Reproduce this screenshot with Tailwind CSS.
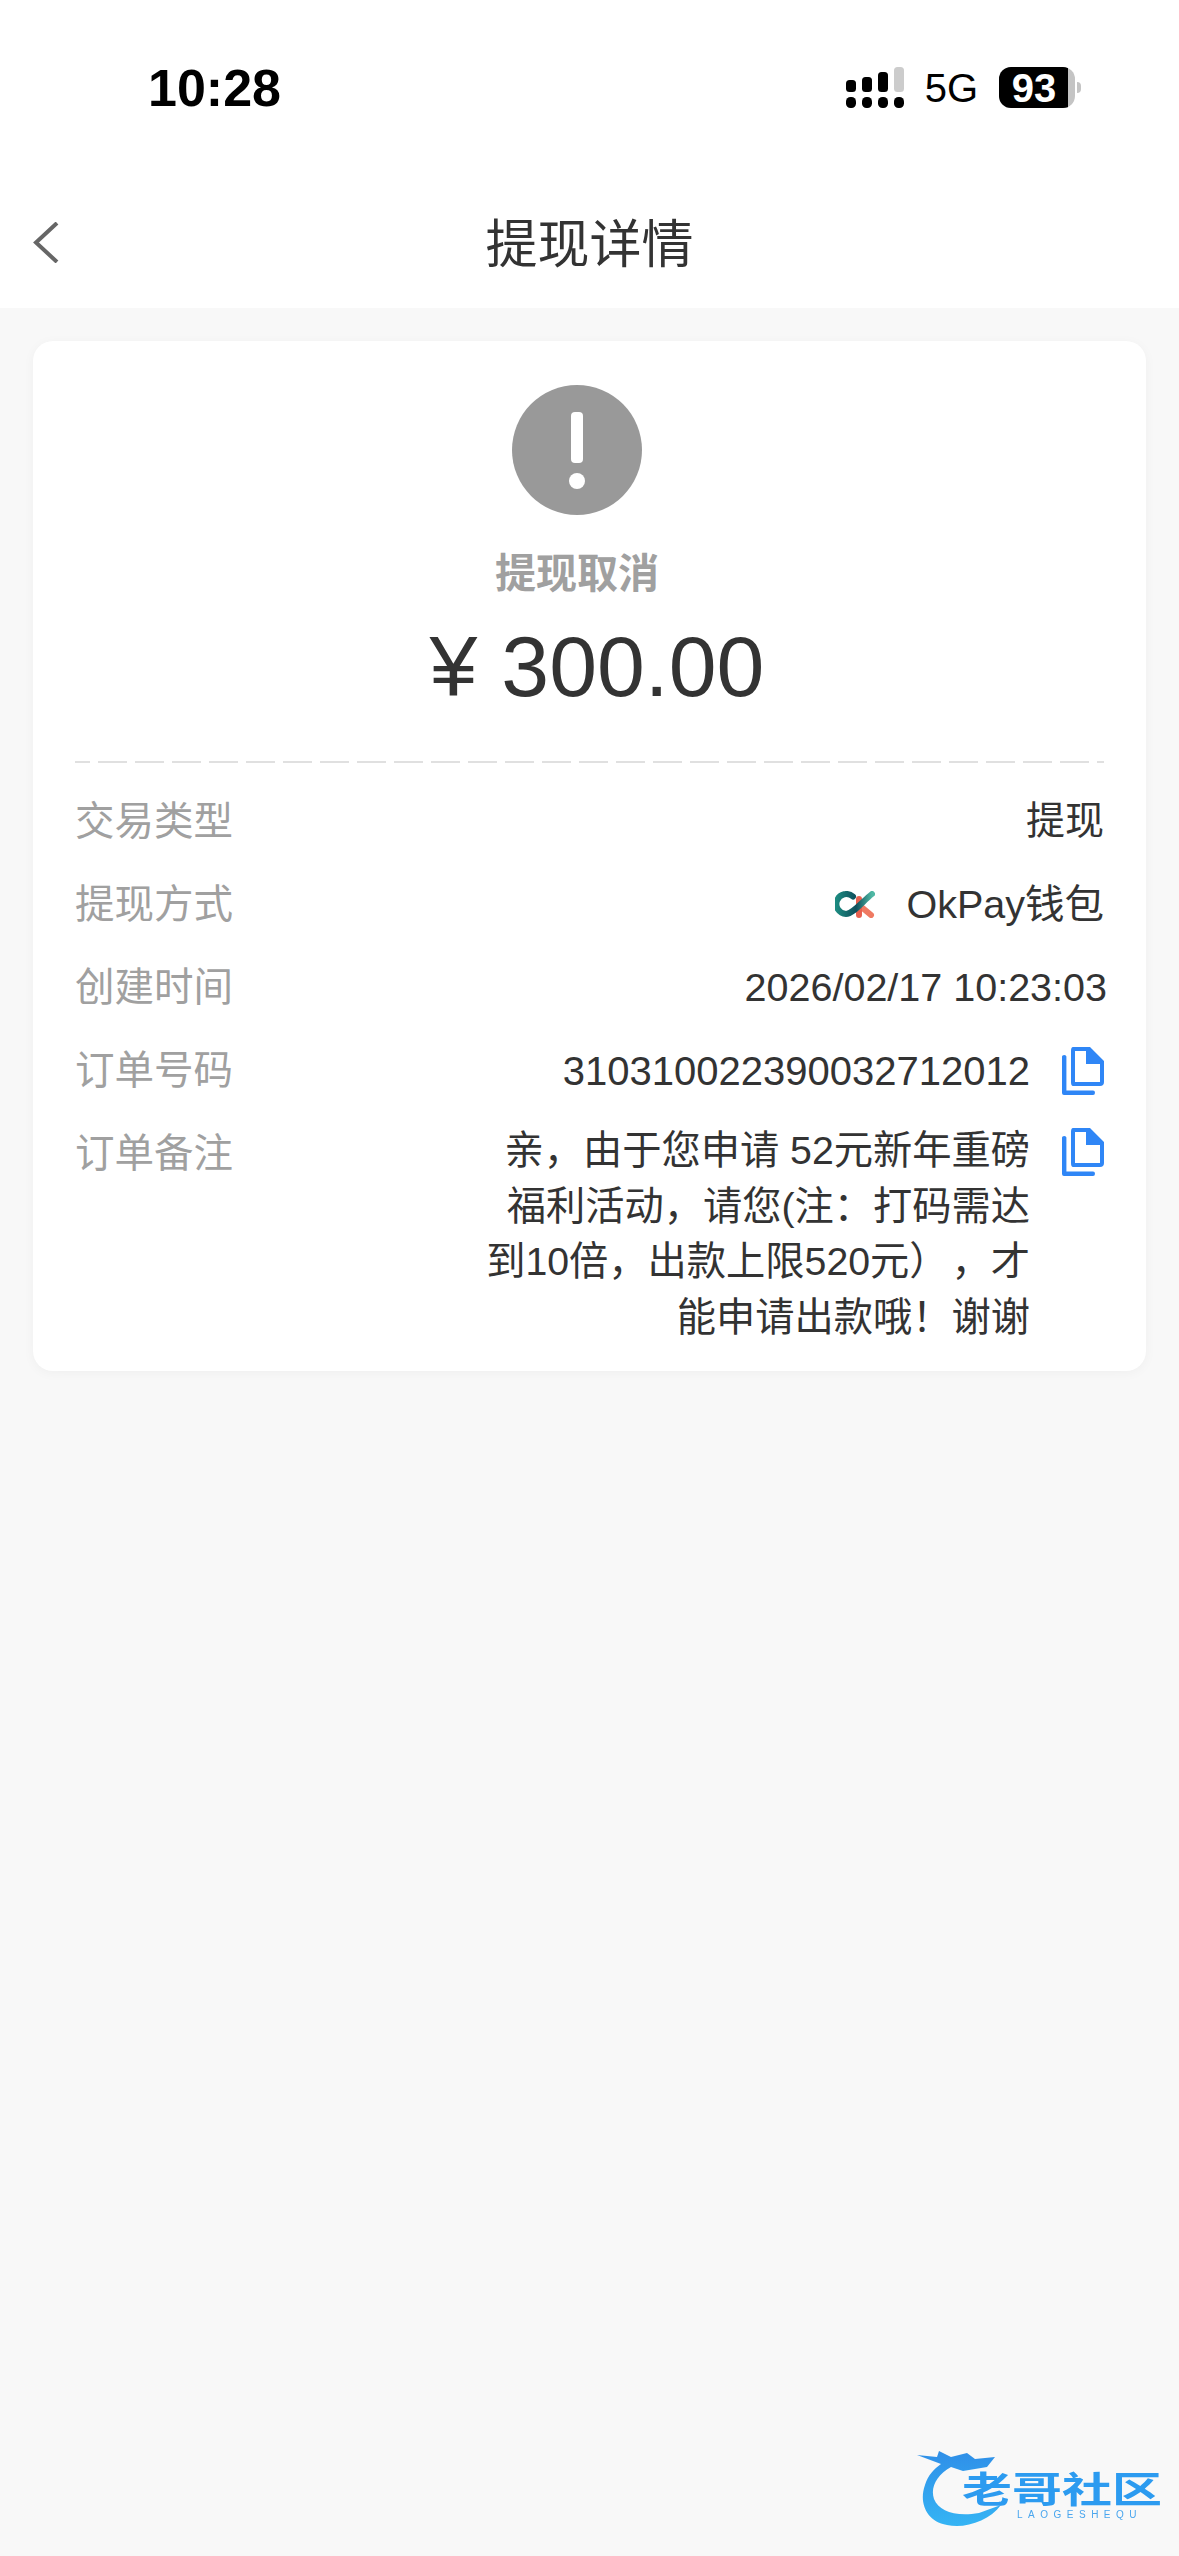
<!DOCTYPE html>
<html lang="zh-CN">
<head>
    <meta charset="UTF-8">
    <meta name="viewport" content="width=device-width, initial-scale=1.0">
    <title>提现详情</title>
    <script src="https://cdn.jsdelivr.net/npm/@tailwindcss/browser@4"></script>
</head>
<body class="relative w-[1179px] h-[2556px] overflow-hidden bg-[#f8f8f8] text-[#333] font-['Liberation_Sans','Noto_Sans_CJK_SC',sans-serif]">
    <!-- top bar -->
    <header class="bg-white">
        <div class="flex items-start justify-between h-[176px] pt-[57px] pl-[148px] pr-[98px] text-black">
            <span class="text-[52px] leading-[62px] font-bold">10:28</span>
            <div class="flex items-start pt-[10px]">
                <svg class="w-[58px] h-[41px]" viewBox="0 0 58 41">
                    <rect x="0" y="13" width="10" height="12" rx="3.500"/>
                    <rect x="16" y="10" width="10" height="15" rx="3.500"/>
                    <rect x="32" y="5" width="10" height="20" rx="3.500"/>
                    <rect x="48" y="0" width="10" height="25" rx="3.500" fill="#cccccc"/>
                    <rect x="0" y="30" width="10" height="11" rx="4.500"/>
                    <rect x="16" y="30" width="10" height="11" rx="4.500"/>
                    <rect x="32" y="30" width="10" height="11" rx="4.500"/>
                    <rect x="48" y="30" width="10" height="11" rx="4.500"/>
                </svg>
                <span class="ml-[21px] mt-[1px] text-[40px] leading-[40px]">5G</span>
                <div class="relative ml-[21px] w-[76px] h-[41px] rounded-[12px] bg-[#c4c4c4] overflow-hidden">
                    <div class="flex items-center justify-center w-[69px] h-full pl-[1px] bg-black text-white text-[40px] font-bold leading-none">93</div>
                </div>
                <div class="ml-[2px] mt-[15px] w-[4px] h-[11px] rounded-r-full bg-[#c4c4c4]"></div>
            </div>
        </div>
        <div class="relative flex items-center justify-center h-[132px] pt-[5px]">
            <svg class="absolute left-[33px] top-[46px] w-[26px] h-[41px]" viewBox="0 0 26 41" fill="none" stroke="#666" stroke-width="4">
                <path d="M24 1 L3 20.500 L24 40"/>
            </svg>
            <h1 class="text-[52px] leading-none text-[#333]">提现详情</h1>
        </div>
    </header>

    <!-- detail card -->
    <main class="mx-[33px] mt-[33px] h-[1030px] rounded-[20px] bg-white shadow-[0_2px_12px_rgba(0,0,0,0.04)] px-[42px] pt-[44px]">
        <div class="flex flex-col items-center pr-[25px]">
            <div class="relative w-[130px] h-[130px] rounded-full bg-[#999]">
                <div class="absolute left-[59px] top-[27px] w-[12px] h-[51px] rounded-[4px] bg-white"></div>
                <div class="absolute left-[57px] top-[88px] w-[16px] h-[16px] rounded-full bg-white"></div>
            </div>
            <p class="mt-[35px] text-[41px] leading-[48px] font-bold text-[#a0a0a0]">提现取消</p>
            <p class="mt-[18px] pl-[40px] text-[86px] leading-[100px] whitespace-pre">¥ 300.00</p>
        </div>
        <svg class="block mt-[45px] w-full h-[2px]" viewBox="0 0 1029 2">
            <line x1="0" y1="1" x2="1029" y2="1" stroke="#e0e0e0" stroke-width="2" stroke-dasharray="29 8" stroke-dashoffset="14"/>
        </svg>

        <div class="mt-[17px] text-[39.500px]">
            <div class="flex items-center justify-between h-[83px]">
                <span class="text-[#a0a0a0]">交易类型</span>
                <span class="text-[39px]">提现</span>
            </div>
            <div class="flex items-center justify-between h-[83px]">
                <span class="text-[#a0a0a0]">提现方式</span>
                <div class="flex items-center">
                    <svg class="w-[40px] h-[27px]" viewBox="0 0 40 27" fill="none" stroke-width="6" stroke-linecap="round">
                        <defs>
                            <linearGradient id="ckTeal" x1="0" y1="0" x2="1" y2="0">
                                <stop offset="0" stop-color="#1c8a80"/>
                                <stop offset="0.55" stop-color="#0f4f5c"/>
                                <stop offset="1" stop-color="#4fb8a4"/>
                            </linearGradient>
                        </defs>
                        <path d="M24 14 L36 24" stroke="#ef7a62"/>
                        <path d="M24 8 V24" stroke="#e8604f"/>
                        <path d="M18 5.500 A10 10 0 1 0 11 23 C18 23 28 10 37 3" stroke="url(#ckTeal)"/>
                    </svg>
                    <span class="ml-[31px]">OkPay钱包</span>
                </div>
            </div>
            <div class="flex items-center justify-between h-[83px]">
                <span class="text-[#a0a0a0]">创建时间</span>
                <span class="-mr-[3px]">2026/02/17 10:23:03</span>
            </div>
            <div class="flex items-center justify-between h-[83px]">
                <span class="text-[#a0a0a0]">订单号码</span>
                <div class="flex items-center gap-[32px]">
                    <span class="text-[40px]">310310022390032712012</span>
                    <svg class="w-[42px] h-[48px]" viewBox="0 0 42 48" fill="#2f86f6">
                        <path fill-rule="evenodd" d="M11 0 H28 L42 14 V35 Q42 39 38 39 H11 Q9 39 9 35 V4 Q9 0 11 0 Z M13 4 V35 H38 V17 H24 V4 Z"/>
                        <path d="M0 9.500 Q0 8 2.200 8 Q4.400 8 4.400 9.500 V43.500 H31 Q33 43.500 33 45.700 Q33 48 31 48 H2 Q0 48 0 46 Z"/>
                    </svg>
                </div>
            </div>
            <div class="flex items-start justify-between">
                <span class="pt-[20px] leading-[43px] text-[#a0a0a0]">订单备注</span>
                <div class="flex items-start gap-[32px] pt-[11px]">
                    <p class="w-[560px] text-right text-[39.250px] leading-[55.500px] whitespace-nowrap">亲，由于您申请 52元新年重磅<br>福利活动，请您(注：打码需达<br>到10倍，出款上限520元）<span class="tracking-[-8px]">&nbsp;</span>，才<br>能申请出款哦！谢谢</p>
                    <svg class="mt-[5px] w-[42px] h-[48px]" viewBox="0 0 42 48" fill="#2f86f6">
                        <path fill-rule="evenodd" d="M11 0 H28 L42 14 V35 Q42 39 38 39 H11 Q9 39 9 35 V4 Q9 0 11 0 Z M13 4 V35 H38 V17 H24 V4 Z"/>
                        <path d="M0 9.500 Q0 8 2.200 8 Q4.400 8 4.400 9.500 V43.500 H31 Q33 43.500 33 45.700 Q33 48 31 48 H2 Q0 48 0 46 Z"/>
                    </svg>
                </div>
            </div>
        </div>
    </main>

    <!-- watermark over the page -->
    <div class="absolute left-[917px] top-[2443px] w-[245px] h-[85px] blur-[0.6px]">
        <svg class="absolute left-0 top-0 w-[120px] h-[85px]" viewBox="0 0 120 85">
            <defs>
                <linearGradient id="ring" x1="0" y1="0" x2="0" y2="1">
                    <stop offset="0" stop-color="#2f8fe8"/>
                    <stop offset="1" stop-color="#35b4f4"/>
                </linearGradient>
            </defs>
            <path d="M0 12 L20 14 L22 8 L34 14 L50 10 L58 16 L78 14 L70 24 L46 28 L34 24 C20 32 13 44 17 56 C22 68 38 74 62 70 L84 62 C72 78 48 86 30 82 C8 78 2 58 8 42 C11 32 17 26 24 21 Z" fill="url(#ring)"/>
        </svg>
        <span class="absolute left-[45px] top-[31px] h-[34px] text-[50px] leading-[34px] font-bold whitespace-nowrap text-[#2c9bf0] scale-y-[0.72]">老哥社区</span>
        <span class="absolute left-[100px] top-[67px] text-[10px] leading-[10px] tracking-[5.500px] whitespace-nowrap text-[#4aa6ee]">LAOGESHEQU</span>
    </div>
</body>
</html>
